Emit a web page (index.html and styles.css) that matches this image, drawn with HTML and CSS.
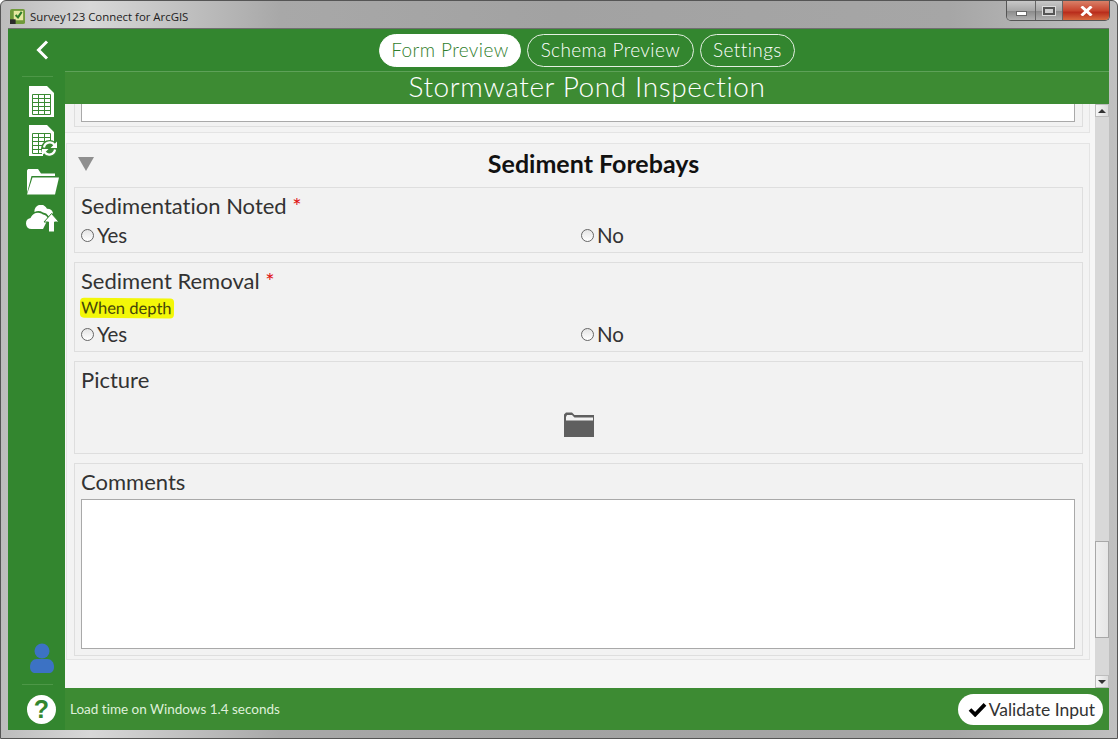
FILE: index.html
```html
<!DOCTYPE html>
<html lang="en">
<head>
<meta charset="utf-8">
<title>Survey123 Connect for ArcGIS</title>
<link rel="stylesheet" href="styles.css">
</head>
<body>
<div class="window">
  <header class="titlebar">
    <div class="title-left">
      <svg class="app-icon" viewBox="0 0 16 16"><rect x="0" y="0" width="16" height="16" rx="2" fill="#6f9a3a"/><rect x="4" y="2" width="10" height="10" fill="#e6e8a0"/><path d="M6 6.500l2.500 2.500 4-6" fill="none" stroke="#2f7d2b" stroke-width="2.200"/><rect x="0" y="11" width="6" height="5" fill="#2b2b2b"/></svg>
      <span>Survey123 Connect for ArcGIS</span>
    </div>
    <div class="controls">
      <div class="ctl ctl-min"><span class="min-glyph"></span></div>
      <div class="ctl ctl-max"><span class="max-glyph"></span></div>
      <div class="ctl ctl-close"><svg viewBox="0 0 13 10" class="x-glyph"><path d="M1.500 .5l10 9M11.500 .5l-10 9" stroke="#fff" stroke-width="3" fill="none"/></svg></div>
    </div>
  </header>
  <div class="app">
    <aside class="sidebar">
      <div class="side-top">
        <svg class="back" viewBox="0 0 14 20"><path d="M12 1.500L3.500 10l8.500 8.500" fill="none" stroke="#fff" stroke-width="3"/></svg>
      </div>
      <div class="side-icons">
        <svg class="ic ic-doc" viewBox="0 0 25 31"><path d="M0 0h18l7 7v24H0z" fill="#fff"/><path d="M3.500 8.500h18v20h-18z M3.500 12.500h18 M3.500 16.500h18 M3.500 20.500h18 M3.500 24.500h18 M9.500 8.500v20 M15.500 8.500v20" fill="none" stroke="#3a8a33" stroke-width="1"/></svg>
        <svg class="ic ic-sync" viewBox="0 0 29 32"><path d="M0 0h18l7 7v15H0z M0 22h14v9H0z" fill="#fff"/><path d="M3.500 8.500h18v20h-18z M3.500 12.500h18 M3.500 16.500h18 M3.500 20.500h18 M3.500 24.500h18 M9.500 8.500v20 M15.500 8.500v20" fill="none" stroke="#3a8a33" stroke-width="1"/><circle cx="20.500" cy="23.500" r="8.500" fill="#3a8a33"/><path d="M15 22.500a5.800 5.800 0 0 1 10.500-2.500M26 24.500a5.800 5.800 0 0 1-10.500 2.500" fill="none" stroke="#fff" stroke-width="2.200"/><path d="M28 16.500v6.500h-6.500zM13 30.500V24h6.500z" fill="#fff"/></svg>
        <svg class="ic ic-folder" viewBox="0 0 33 26"><path d="M1 24V1.500L2 0h10l3 4.500h14V7H5.500z" fill="#fff"/><path d="M6.500 8.500H33l-4 17H1z" fill="#fff"/></svg>
        <svg class="ic ic-cloud" viewBox="0 0 33 27"><path d="M5.500 24a5.500 5.500 0 0 1-1-10.900A8 8 0 0 1 17 9.500 6 6 0 0 1 22 14l-5 10z" fill="#fff"/><path d="M8.500 7A6.500 6.500 0 0 1 21 3.800 6 6 0 0 1 27 8l-3 3h-1.500A7.500 7.500 0 0 0 17 7.500 9 9 0 0 0 8.500 7z" fill="#fff"/><path d="M25.500 8.500l7.500 8.500h-4.500v10h-6V17H18z" fill="#fff" stroke="#33862f" stroke-width="1"/></svg>
      </div>
      <div class="side-bottom">
        <svg class="user" viewBox="0 0 26 30"><circle cx="13" cy="8" r="7.500" fill="#3c72c4"/><path d="M1 24c0-5 3-8 6.500-8h11c3.500 0 6.500 3 6.500 8 0 4-2.500 6-5 6H6c-2.500 0-5-2-5-6z" fill="#3c72c4"/></svg>
        <div class="side-rule"></div>
        <div class="help">?</div>
      </div>
    </aside>
    <main class="main">
      <nav class="tabs">
        <span class="tab tab-active">Form Preview</span>
        <span class="tab tab-schema">Schema Preview</span>
        <span class="tab">Settings</span>
      </nav>
      <h1 class="form-title">Stormwater Pond Inspection</h1>
      <div class="scroller">
        <div class="form">
          <div class="card card-prev">
            <div class="group group-prev"><div class="input input-prev"></div></div>
          </div>
          <section class="card card-main">
            <div class="card-head">
              <span class="tri"></span>
              <h2>Sediment Forebays</h2>
            </div>
            <div class="group g1">
              <div class="label">Sedimentation Noted <span class="req">*</span></div>
              <div class="radios">
                <div class="radio"><span class="dot"></span>Yes</div>
                <div class="radio"><span class="dot"></span>No</div>
              </div>
            </div>
            <div class="group g2">
              <div class="label">Sediment Removal <span class="req">*</span></div>
              <div class="hint"><span class="mark">When depth</span></div>
              <div class="radios">
                <div class="radio"><span class="dot"></span>Yes</div>
                <div class="radio"><span class="dot"></span>No</div>
              </div>
            </div>
            <div class="group g3">
              <div class="label">Picture</div>
              <div class="pic">
                <svg class="pic-folder" viewBox="0 0 30 25"><path fill-rule="evenodd" d="M0 25V2.500L2 0.500h6l2.500 2.500H30v22z M2 8.500h27V5.500H10.500L8 3H3L2 5z" fill="#5f5f5f"/></svg>
              </div>
            </div>
            <div class="group g4">
              <div class="label">Comments</div>
              <div class="input input-comments"></div>
            </div>
          </section>
        </div>
        <div class="scrollbar">
          <div class="sb-btn"><span class="arrow-up"></span></div>
          <div class="sb-track sb-track-top"></div>
          <div class="sb-thumb"></div>
          <div class="sb-track sb-track-bottom"></div>
          <div class="sb-btn"><span class="arrow-down"></span></div>
        </div>
      </div>
      <footer class="footer">
        <span class="status">Load time on Windows 1.4 seconds</span>
        <span class="validate"><svg class="check" viewBox="0 0 20 16"><path d="M2 8l5.500 5.500L18 2.500" fill="none" stroke="#000" stroke-width="4"/></svg>Validate Input</span>
      </footer>
    </main>
  </div>
</div>
</body>
</html>
```
FILE: styles.css
```css
* { box-sizing: border-box; }
html, body { margin: 0; padding: 0; }
body { width: 1118px; height: 739px; overflow: hidden; font-family: "Lato", "Liberation Sans", sans-serif; font-variant-ligatures: none; color: #222; }
.window { width: 1118px; height: 739px; display: flex; flex-direction: column; padding: 0 8px 8px 7px; border: 1px solid #555; border-radius: 6px 6px 0 0; background: linear-gradient(90deg, #bcbcbc 0%, #d8d8d8 8%, #a8a8a8 25%, #a2a2a2 50%, #a6a6a6 85%, #c0c0c0 100%); }
.titlebar { height: 27px; flex: none; display: flex; justify-content: space-between; align-items: flex-start; }
.title-left { display: flex; align-items: center; gap: 5px; height: 27px; font-family: "Open Sans", "Liberation Sans", sans-serif; font-size: 11.4px; color: #1c1c1c; margin-left: 2px; padding-top: 3px; }
.app-icon { width: 15px; height: 15px; margin-top: 1px; }
.controls { display: flex; height: 20px; border: 1px solid #555; border-top: none; border-radius: 0 0 5px 5px; overflow: hidden; margin-right: -1px; }
.ctl { display: flex; align-items: center; justify-content: center; border-left: 1px solid #666; }
.ctl:first-child { border-left: none; }
.ctl-min { width: 28px; background: linear-gradient(#c8c8c8, #a8a8a8 50%, #8c8c8c 55%, #b0b0b0); }
.ctl-max { width: 27px; background: linear-gradient(#c8c8c8, #a8a8a8 50%, #8c8c8c 55%, #b0b0b0); }
.ctl-close { width: 47px; background: linear-gradient(#d98068, #c8452f 50%, #b92d1c 60%, #d86a3f); }
.min-glyph { display: block; width: 11px; height: 5px; margin-top: 6px; background: #fff; border: 1px solid #666; }
.max-glyph { display: block; width: 12px; height: 8px; background: #cfcfcf; border: 2px solid #555; box-shadow: 0 0 0 1px #ddd; }
.x-glyph { width: 13px; height: 10px; }
.app { flex: 1; min-height: 0; display: flex; background: #33862f; border-top: 1px solid #6f6f6f; }
.sidebar { width: 57px; flex: none; display: flex; flex-direction: column; background: #33862f; }
.side-top { height: 48px; flex: none; margin: 0 12px 0 14px; border-bottom: 1px solid #4d9747; display: flex; align-items: center; padding: 0 0 5px 13px; }
.back { width: 14px; height: 20px; }
.side-icons { display: flex; flex-direction: column; align-items: flex-start; margin-top: 9px; }
.ic { display: block; }
.ic-doc { width: 25px; height: 31px; margin-left: 21px; }
.ic-sync { width: 29px; height: 32px; margin: 8px 0 0 21px; }
.ic-folder { width: 33px; height: 26px; margin: 12px 0 0 18px; }
.ic-cloud { width: 33px; height: 27px; margin: 10px 0 0 18px; }
.side-bottom { margin-top: auto; display: flex; flex-direction: column; align-items: flex-start; }
.user { width: 26px; height: 30px; margin: 0 0 11px 21px; }
.side-rule { width: 31px; height: 1px; margin: 0 0 10px 14px; background: #4d9747; }
.help { width: 29px; height: 29px; margin: 0 0 6px 19px; border-radius: 50%; background: #fff; color: #33862f; font-family: "Liberation Sans", sans-serif; font-weight: 700; font-size: 25px; line-height: 29px; text-align: center; }
.main { flex: 1; min-width: 0; display: flex; flex-direction: column; }
.tabs { height: 43px; flex: none; display: flex; justify-content: center; align-items: center; gap: 6px; border-bottom: 1px solid #5ea158; }
.tab { height: 33px; padding: 0 12px 2px; display: flex; align-items: center; border: 1px solid #e4f0e2; border-radius: 17px; color: #fff; font-size: 19px; font-weight: 300; letter-spacing: .4px; white-space: nowrap; }
.tab-active { background: #fff; color: #2f7d2c; border-color: #fff; padding: 0 11px 2px; }
.tab-schema { padding: 0 13px 2px; }
.form-title { height: 32px; flex: none; margin: 0; background: #3d8b33; color: #fff; font-size: 28px; font-weight: 300; line-height: 29px; text-align: center; letter-spacing: .6px; }
.scroller { flex: 1; min-height: 0; display: flex; background: #f6f6f6; }
.form { flex: 1; min-width: 0; padding-right: 5px; overflow: hidden; }
.card { background: #f3f3f3; border: 1px solid #e4e4e4; }
.card-prev { height: 29px; border-top: none; border-left: none; padding: 0 6px 5px 9px; }
.group { background: #f2f2f2; border: 1px solid #dedede; padding: 0 6px; }
.group-prev { height: 23px; border-top: none; }
.input { background: #fff; border: 1px solid #a9a9a9; margin-right: 1px; }
.input-prev { height: 18px; border-top: none; }
.card-main { margin: 10px 0 0 1px; height: 517px; padding: 0 6px 0 7px; }
.card-head { height: 43px; position: relative; display: flex; justify-content: center; align-items: center; padding: 0 0 6px 30px; }
.card-head h2 { margin: 0; font-size: 25px; line-height: 36px; font-weight: 700; color: #111; }
.tri { position: absolute; left: 4px; top: 13px; width: 0; height: 0; border-left: 8px solid transparent; border-right: 8px solid transparent; border-top: 14px solid #8f8f8f; }
.group + .group { margin-top: 9px; }
.g1 { height: 66px; }
.g2 { height: 90px; }
.g3 { height: 93px; }
.g4 { height: 193px; }
.label { font-size: 22px; line-height: 36px; color: #333; }
.req { color: #e01010; }
.hint { font-size: 16.5px; line-height: 20px; margin: -1px 0 3px; }
.mark { display: inline-block; margin-left: -1px; padding: 0 2px 0 1px; height: 20px; background: #f3f708; border-radius: 4px; color: #45450a; transform: rotate(0.5deg); }
.radios { display: flex; height: 26px; align-items: center; }
.g1 .radios { margin-top: -2px; }
.radio { display: flex; align-items: center; font-size: 20.500px; line-height: 26px; color: #333; }
.radio:first-child { width: 500px; flex: none; }
.dot { width: 13px; height: 13px; margin-right: 3px; flex: none; border-radius: 50%; border: 1px solid #666; background: linear-gradient(#e4e4e4, #fff); }
.pic { display: flex; justify-content: center; padding-top: 14px; }
.pic-folder { width: 30px; height: 25px; }
.input-comments { height: 150px; margin-top: -1px; }
.scrollbar { width: 14px; flex: none; display: flex; flex-direction: column; }
.sb-btn { height: 13px; flex: none; display: flex; align-items: center; justify-content: center; background: linear-gradient(90deg, #f6f6f6, #dcdcdc); border: 1px solid #bdbdbd; }
.sb-track { flex: none; background: #d8d8d8; }
.sb-track-top { height: 424px; }
.sb-track-bottom { height: 37px; }
.sb-thumb { flex: 1; background: linear-gradient(90deg, #efefef, #e6e6e6); border: 1px solid #a8a8a8; }
.arrow-up { width: 0; height: 0; border: 4px solid transparent; border-top: none; border-bottom: 4px solid #333; }
.arrow-down { width: 0; height: 0; border: 4px solid transparent; border-bottom: none; border-top: 4px solid #333; }
.footer { height: 42px; flex: none; display: flex; align-items: center; justify-content: space-between; background: #3d8b33; padding: 0 6px 0 5px; }
.status { color: #dff0da; font-size: 13.500px; }
.validate { height: 31px; display: flex; align-items: center; gap: 2px; padding: 0 8px 0 10px; background: #fff; border-radius: 16px; font-size: 17.500px; color: #333; white-space: nowrap; }
.check { width: 19px; height: 15px; }
```
